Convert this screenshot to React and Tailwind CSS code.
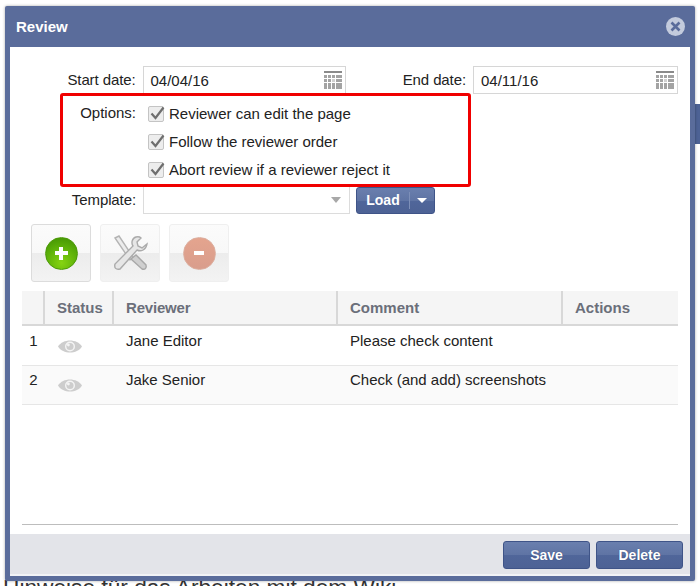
const FONT = "font-['Liberation_Sans',Arial,sans-serif]";

const CalendarIcon = () => (
  <svg width="18" height="18" viewBox="0 0 18 18" className="shrink-0">
    <rect x="0" y="0" width="18" height="2" fill="#8a8a8a" />
    {[4, 8, 12, 15].map((y) =>
      [0, 4, 8, 12, 15].map((x) => (
        <rect key={`${x}-${y}`} x={x} y={y} width="3" height="3" fill={x === 8 && y === 8 ? "#d0d0d0" : "#a3a3a3"} />
      ))
    )}
  </svg>
);

const DateField = ({ value, width }) => (
  <div className={`flex items-center justify-between h-[28px] ${width} bg-white border border-[#d6d6d6] pl-[7px] pr-[3px] text-[15px] text-[#222]`}>
    <span className="pt-[2px]">{value}</span>
    <CalendarIcon />
  </div>
);

const CheckRow = ({ label }) => (
  <div className="flex items-center h-[28px]">
    <div className="relative w-[16px] h-[16px] rounded-[2px] border border-[#c4c4c4] bg-[#ededed] shrink-0">
      <svg width="18" height="16" viewBox="0 0 18 16" className="absolute left-0 top-[-2px]">
        <path d="M2.5 8.5 L6.5 13 L14.5 2.5" fill="none" stroke="#6e6e6e" strokeWidth="2.2" />
      </svg>
    </div>
    <span className="ml-[5px] text-[15px] text-[#222] whitespace-nowrap">{label}</span>
  </div>
);

const ToolButton = ({ children, faded }) => (
  <div className={`w-[60px] h-[58px] rounded-[3px] border flex items-center justify-center bg-[linear-gradient(#fbfbfb_0%,#f8f8f8_50%,#ececec_50%,#f3f3f3_100%)] ${faded ? "border-[#efefef]" : "border-[#dcdcdc]"}`}>
    {children}
  </div>
);

const EyeIcon = () => (
  <svg width="24" height="15" viewBox="0 0 24 15">
    <path d="M0 7.5 C5 -0.5 19 -0.5 24 7.5 C19 15.5 5 15.5 0 7.5 Z" fill="#cdcdcd" />
    <circle cx="12" cy="7.5" r="5" fill="#f4f4f4" />
    <circle cx="12" cy="7.5" r="3.6" fill="#cdcdcd" />
    <circle cx="10.4" cy="6" r="1.4" fill="#f4f4f4" />
  </svg>
);

const BlueButton = ({ children }) => (
  <button className="w-[87px] h-[28px] rounded-[3px] border border-[#3f5488] bg-[linear-gradient(#6a7fae_0%,#5f74a4_50%,#50669a_51%,#4d6295_100%)] text-white text-[14px] font-bold [text-shadow:0_0_1px_#2d3f70]">
    {children}
  </button>
);

const RowCell = ({ className, children }) => <div className={`shrink-0 ${className}`}>{children}</div>;

const REVIEWS = [
  { n: "1", name: "Jane Editor", comment: "Please check content", row: "h-[40px] bg-white pt-[4px]" },
  { n: "2", name: "Jake Senior", comment: "Check (and add) screenshots", row: "h-[39px] bg-[#fafafa] pt-[3px]" },
];

export default function App() {
  return (
    <div className={`relative w-[700px] h-[586px] overflow-hidden bg-white ${FONT}`}>
      {/* page behind the dialog */}
      <div className="absolute left-[3px] top-[570px] text-[22.7px] text-[#333] whitespace-nowrap">Hinweise für das Arbeiten mit dem Wiki</div>
      <div className="absolute right-0 top-[104px] w-[5px] h-[40px] bg-[#4d6295]" />

      <div className="relative pt-[6px] pl-[5px]">
        <div className="w-[690px] h-[575px] bg-[#5a6c9b] rounded-[2px] shadow-[0_0_3px_rgba(0,0,0,0.35)] flex flex-col px-[5px] pb-[5px]">
          {/* title bar */}
          <div className="h-[41px] shrink-0 flex items-center justify-between pl-[6px] pr-[5px]">
            <span className="text-white text-[15px] font-bold pt-[2px]">Review</span>
            <svg width="19" height="19" viewBox="0 0 19 19">
              <circle cx="9.5" cy="9.5" r="9.5" fill="#c3cbdd" />
              <path d="M5.5 5.5 L13.5 13.5 M13.5 5.5 L5.5 13.5" stroke="#5a6c9b" strokeWidth="2.6" />
            </svg>
          </div>

          <div className="flex-1 bg-white flex flex-col min-h-0">
            <div className="flex-1 px-[12px] flex flex-col relative">
              {/* dates */}
              <div className="flex items-center h-[28px] mt-[19px]">
                <span className="w-[115px] pr-[1px] text-right text-[15px] tracking-[-0.1px] text-[#222]">Start date:</span>
                <div className="ml-[6px] mr-[1px]"><DateField value="04/04/16" width="w-[203px]" /></div>
                <span className="w-[120px] text-right text-[15px] tracking-[-0.1px] text-[#222]">End date:</span>
                <div className="ml-[7px]"><DateField value="04/11/16" width="w-[205px]" /></div>
              </div>

              {/* options, red frame is part of the screenshot */}
              <div className="relative z-10 w-[411px] h-[94px] -mt-[1px] ml-[38px] border-[3px] border-[#f00000] rounded-[3px] flex bg-white">
                <span className="w-[73px] mt-[6px] text-right text-[15px] text-[#222]">Options:</span>
                <div className="ml-[12px] pt-[4px]">
                  <CheckRow label="Reviewer can edit the page" />
                  <CheckRow label="Follow the reviewer order" />
                  <CheckRow label="Abort review if a reviewer reject it" />
                </div>
              </div>

              {/* template */}
              <div className="flex items-center h-[28px] -mt-[1px]">
                <span className="w-[115px] pr-[1px] text-right text-[15px] tracking-[-0.1px] text-[#222]">Template:</span>
                <div className="ml-[6px] w-[207px] h-[28px] border border-[#dcdcdc] flex items-center justify-end pr-[8px]">
                  <div className="w-0 h-0 border-x-[5px] border-x-transparent border-t-[6px] border-t-[#a8a8a8]" />
                </div>
                <div className="ml-[6px] w-[79px] h-[27px] rounded-[3px] border border-[#3f5488] bg-[linear-gradient(#6a7fae_0%,#5f74a4_50%,#50669a_51%,#4d6295_100%)] flex items-center text-white">
                  <span className="w-[52px] text-center text-[14px] font-bold">Load</span>
                  <span className="w-px h-[17px] bg-[#7d8fb8]" />
                  <span className="ml-[7px] w-0 h-0 border-x-[5px] border-x-transparent border-t-[5px] border-t-white" />
                </div>
              </div>

              {/* toolbar */}
              <div className="flex gap-[9px] mt-[10px] ml-[9px]">
                <ToolButton>
                  <div className="w-[33px] h-[33px] rounded-full bg-[radial-gradient(circle_at_50%_80%,#86d412,#58ac08_60%,#3f8e03)] flex items-center justify-center border border-[#4c9a08]">
                    <span className="relative w-[13px] h-[13px] flex items-center justify-center">
                      <span className="absolute w-[13px] h-[4px] bg-white" />
                      <span className="absolute w-[4px] h-[13px] bg-white" />
                    </span>
                  </div>
                </ToolButton>
                <ToolButton faded>
                  <svg width="36" height="36" viewBox="0 0 36 36">
                    <path d="M3 3 L7 1 L21 22 L18 25 Z" fill="#ececec" stroke="#b4b4b4" strokeWidth="1.4" />
                    <path d="M19 24 L24 20 L34 30 C35 33 33 35 30 34 Z" fill="#cfcfcf" stroke="#a8a8a8" strokeWidth="1.4" />
                    <path d="M24 2 C20 3 19 8 21 11 L3 29 C2 33 4 35 8 34 L25 15 C29 17 34 15 35 9 L30 13 L26 11 L25 7 L29 3 C28 2 26 1.5 24 2 Z" fill="#e6e6e6" stroke="#ababab" strokeWidth="1.4" />
                  </svg>
                </ToolButton>
                <ToolButton faded>
                  <div className="w-[33px] h-[33px] rounded-full bg-[linear-gradient(#e4a48e,#d99d8c)] border border-[#dcae9e] flex items-center justify-center">
                    <span className="w-[10px] h-[4px] bg-white" />
                  </div>
                </ToolButton>
              </div>

              {/* table */}
              <div className="mt-[9px] w-[656px]">
                <div className="flex h-[35px] bg-[#f5f5f5] border-b-2 border-[#d8d8d8] text-[15px] font-bold text-[#6b6f7a]">
                  <RowCell className="w-[23px] border-r-2 border-[#d8d8d8]" />
                  <RowCell className="w-[69px] border-r-2 border-[#d8d8d8] pl-[12px] leading-[33px]">Status</RowCell>
                  <RowCell className="w-[224px] border-r-2 border-[#d8d8d8] pl-[12px] leading-[33px] tracking-[-0.2px]">Reviewer</RowCell>
                  <RowCell className="w-[225px] border-r-2 border-[#d8d8d8] pl-[12px] leading-[33px]">Comment</RowCell>
                  <RowCell className="w-[115px] pl-[12px] leading-[33px]">Actions</RowCell>
                </div>
                {REVIEWS.map((r) => (
                  <div key={r.n} className={`flex ${r.row} border-b border-[#e6e6e6] text-[15px] text-[#222]`}>
                    <RowCell className="w-[23px] text-center">{r.n}</RowCell>
                    <RowCell className="w-[69px] pl-[13px] pt-[9px]"><EyeIcon /></RowCell>
                    <RowCell className="w-[224px] pl-[12px]">{r.name}</RowCell>
                    <RowCell className="w-[225px] pl-[12px]">{r.comment}</RowCell>
                  </div>
                ))}
              </div>

              <div className="mt-auto mb-[9px] h-px bg-[#bdbdbd]" />
            </div>

            {/* footer */}
            <div className="h-[42px] shrink-0 bg-[#e3e4e9] flex items-start justify-end gap-[6px] pt-[7px] pr-[7px] border-b-2 border-b-[#f2f3f6]">
              <BlueButton>Save</BlueButton>
              <BlueButton>Delete</BlueButton>
            </div>
          </div>
        </div>
      </div>
    </div>
  );
}
